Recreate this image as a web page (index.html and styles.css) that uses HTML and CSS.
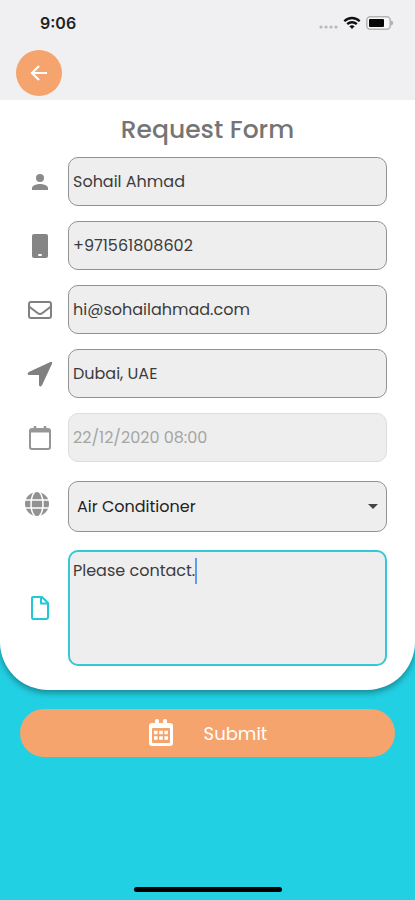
FILE: index.html
```
<!DOCTYPE html>
<html lang="en">

<head>
    <meta charset="UTF-8">
    <meta name="viewport" content="width=device-width, initial-scale=1">
    <title>Request Form</title>
    <link rel="stylesheet" href="styles.css">
</head>

<body>
    <!--header-->
    <header class="header">
        <div class="status">
            <span class="time">9:06</span>
            <div class="signals">
                <svg width="20" height="4" viewBox="0 0 20 4" fill="#b8b7ba">
                    <circle cx="3" cy="2" r="1.600"/>
                    <circle cx="8" cy="2" r="1.600"/>
                    <circle cx="13" cy="2" r="1.600"/>
                    <circle cx="18" cy="2" r="1.600"/>
                </svg>
                <svg width="18" height="14" viewBox="0 0 18 14" fill="none" stroke="#111" stroke-width="2.3">
                    <path d="M1.3 5.2C5.6.9 12.4.9 16.7 5.2"/>
                    <path d="M4.2 8.2c2.7-2.6 6.9-2.6 9.6 0"/>
                    <path d="M6.4 10.2c1.5-1.4 3.7-1.4 5.2 0L9 13z" fill="#111" stroke="none"/>
                </svg>
                <svg width="28" height="14" viewBox="0 0 28 14">
                    <rect x=".8" y=".8" width="23.4" height="12.4" rx="3.5" fill="#f8f8f8" stroke="#b5b4b7" stroke-width="1.6"/>
                    <rect x="3" y="3" width="15" height="8" rx="1" fill="#080808"/>
                    <path d="M25 4.5c3 1.2 3 3.8 0 5z" fill="#b0b0b2"/>
                </svg>
            </div>
        </div>
        <button class="back" type="button" aria-label="Back">
            <svg width="18" height="18" viewBox="0 0 18 18" fill="none" stroke="#fff" stroke-width="2.2">
                <path d="M17 9H2.5M9 2L2 9l7 7"/>
            </svg>
        </button>
    </header>
    <!--header end-->

    <form class="form">
        <main class="card">
            <h1 class="title">Request Form</h1>

            <div class="row">
                <label for="name" aria-label="Name">
                    <svg width="24" height="24" viewBox="0 0 24 24" fill="#8a8a8a">
                        <circle cx="12" cy="8" r="4"/>
                        <path d="M4 20v-2c0-2.7 5.300-4 8-4s8 1.300 8 4v2z"/>
                    </svg>
                </label>
                <input class="field" id="name" type="text" value="Sohail Ahmad">
            </div>

            <div class="row">
                <label for="phone" aria-label="Phone">
                    <svg width="24" height="24" viewBox="0 0 24 24">
                        <rect x="4" y="0" width="16" height="24" rx="2" fill="#858585"/>
                        <rect x="10" y="20" width="4" height="2" rx="1" fill="#fff"/>
                    </svg>
                </label>
                <input class="field" id="phone" type="tel" value="+971561808602">
            </div>

            <div class="row">
                <label for="email" aria-label="Email">
                    <svg width="24" height="24" viewBox="0 0 24 24" fill="none" stroke="#808080" stroke-width="2">
                        <rect x="1" y="4" width="22" height="16" rx="2"/>
                        <path d="M1 8.500l8.500 6.500q2.500 2 5 0L23 8.500"/>
                    </svg>
                </label>
                <input class="field" id="email" type="email" value="hi@sohailahmad.com">
            </div>

            <div class="row">
                <label for="address" aria-label="Address">
                    <svg width="26" height="26" viewBox="0 0 26 26" fill="#808080">
                        <path d="M23.400 1L1.800 11c-1.800 1-1.300 3 .5 3H12v9.700c0 1.900 2.200 2.300 3 .6L25 2.700C25.500 1.300 24.600.5 23.400 1z"/>
                    </svg>
                </label>
                <input class="field" id="address" type="text" value="Dubai, UAE">
            </div>

            <div class="row">
                <label for="date" aria-label="Date">
                    <svg width="24" height="26" viewBox="0 0 24 26" fill="none" stroke="#969696" stroke-width="2">
                        <rect x="2" y="4" width="20" height="20" rx="2"/>
                        <path d="M2 6h20" stroke-width="3"/>
                        <path d="M7 1v4M17 1v4" stroke-width="2.500"/>
                    </svg>
                </label>
                <input class="field" id="date" type="text" value="22/12/2020 08:00" disabled>
            </div>

            <div class="row service">
                <label for="service" aria-label="Service">
                    <svg width="26" height="26" viewBox="0 0 26 26">
                        <circle cx="13" cy="13" r="12" fill="#929292"/>
                        <g fill="none" stroke="#fff" stroke-width="1.500">
                            <ellipse cx="13" cy="13" rx="6" ry="13"/>
                            <path d="M0 9h26M0 17h26"/>
                        </g>
                    </svg>
                </label>
                <select class="field" id="service">
                    <option>Air Conditioner</option>
                </select>
            </div>

            <div class="row message">
                <label for="message" aria-label="Message">
                    <svg width="20" height="26" viewBox="0 0 20 26" fill="none" stroke="#22c8d8" stroke-width="2" stroke-linejoin="round">
                        <path d="M3 2h9l6 6v14q0 2-2 2H3q-1 0-1-2V3q0-1 1-1z"/>
                        <path d="M11 2v6.500h7"/>
                    </svg>
                </label>
                <textarea class="field" id="message">Please contact.</textarea>
                <span class="caret"></span>
            </div>
        </main>

        <button class="submit" type="submit">
            <svg width="26" height="28" viewBox="0 0 26 28">
                <path d="M4 4h3V2q0-2 2-2t2 2v2h4V2q0-2 2-2t2 2v2h3q3 0 3 3v17q0 3-3 3H4q-3 0-3-3V7q0-3 3-3z" fill="#fff"/>
                <rect x="4" y="9" width="18" height="15" rx="1" fill="#f4a46c"/>
                <path d="M6 13.500h14M6 19h14" fill="none" stroke="#fff" stroke-width="3.500" stroke-dasharray="3.600 1.600"/>
            </svg>
            <span>Submit</span>
        </button>
    </form>

    <div class="home-bar"></div>
</body>

</html>
```
FILE: styles.css
```
* {
    box-sizing: border-box;
}

body {
    margin: 0;
    min-height: 100vh;
    display: flex;
    flex-direction: column;
    background: #22d0e3;
    font-family: Poppins, Inter, sans-serif;
    color: #333;
}

svg {
    display: block;
    flex: none;
}

/*header*/
.header {
    position: relative;
    z-index: 1;
    height: 100px;
    padding: 12px 16px 0;
    background: #f0eff2;
}

.status {
    display: flex;
    justify-content: space-between;
    height: 38px;
    padding: 0 5px 0 24px;
}

.time {
    font-family: Inter, sans-serif;
    font-size: 16px;
    line-height: 22px;
    font-weight: 600;
    color: #222;
}

.signals {
    display: flex;
    align-items: center;
    gap: 5px;
    height: 22px;
}

.signals svg:first-child {
    margin-top: 8px;
}

.back {
    display: flex;
    align-items: center;
    justify-content: center;
    width: 46px;
    height: 46px;
    padding: 0;
    border: none;
    border-radius: 50%;
    background: #f4a46c;
    cursor: pointer;
}

/*form card*/
.card {
    padding: 12px 28px 24px 12px;
    background: #fff;
    border-radius: 0 0 48px 48px;
    box-shadow: 0 3px 6px rgba(0, 0, 0, 0.35);
}

.title {
    margin: 0 0 9px;
    padding-left: 16px;
    font-size: 25px;
    line-height: 36px;
    font-weight: 500;
    text-align: center;
    color: #757575;
}

.row {
    position: relative;
    display: flex;
    align-items: center;
    margin-bottom: 15px;
}

.row label {
    display: flex;
    justify-content: center;
    width: 56px;
    flex: none;
}

.field {
    flex: 1;
    min-width: 0;
    height: 49px;
    margin: 0;
    padding: 0 4px;
    border: 1px solid #929292;
    border-radius: 10px;
    outline: none;
    background: #eee;
    font-family: inherit;
    font-size: 16px;
    color: #3c3c3c;
}

.field:disabled {
    border-color: #ddd;
    color: #a5a5a5;
}

.service {
    margin: 19px 0 18px;
}

.service label {
    padding: 0 6px 6px 0;
}

select.field {
    height: 51px;
    padding: 0 8px;
    appearance: none;
    color: #222;
}

/*arrow of the select*/
.service::after {
    content: '';
    position: absolute;
    right: 9px;
    top: 23px;
    border: 5px solid transparent;
    border-top-color: #444;
    border-bottom: none;
    pointer-events: none;
}

.message {
    margin-bottom: 0;
}

textarea.field {
    height: 116px;
    padding: 7px 3px;
    border: 2px solid #35c8d6;
    line-height: 24px;
    resize: none;
}

.caret {
    position: absolute;
    left: 183px;
    top: 8px;
    width: 2px;
    height: 26px;
    background: #5b9df0;
}

/*submit*/
.submit {
    display: flex;
    align-items: center;
    justify-content: center;
    gap: 30px;
    width: calc(100% - 40px);
    height: 48px;
    margin: 19px 20px 0;
    padding: 0;
    border: none;
    border-radius: 24px;
    background: #f4a46c;
    font-family: inherit;
    font-size: 18px;
    color: #fff;
    cursor: pointer;
}

.home-bar {
    width: 148px;
    height: 5px;
    margin: auto auto 8px;
    border-radius: 3px;
    background: #000;
}
```
